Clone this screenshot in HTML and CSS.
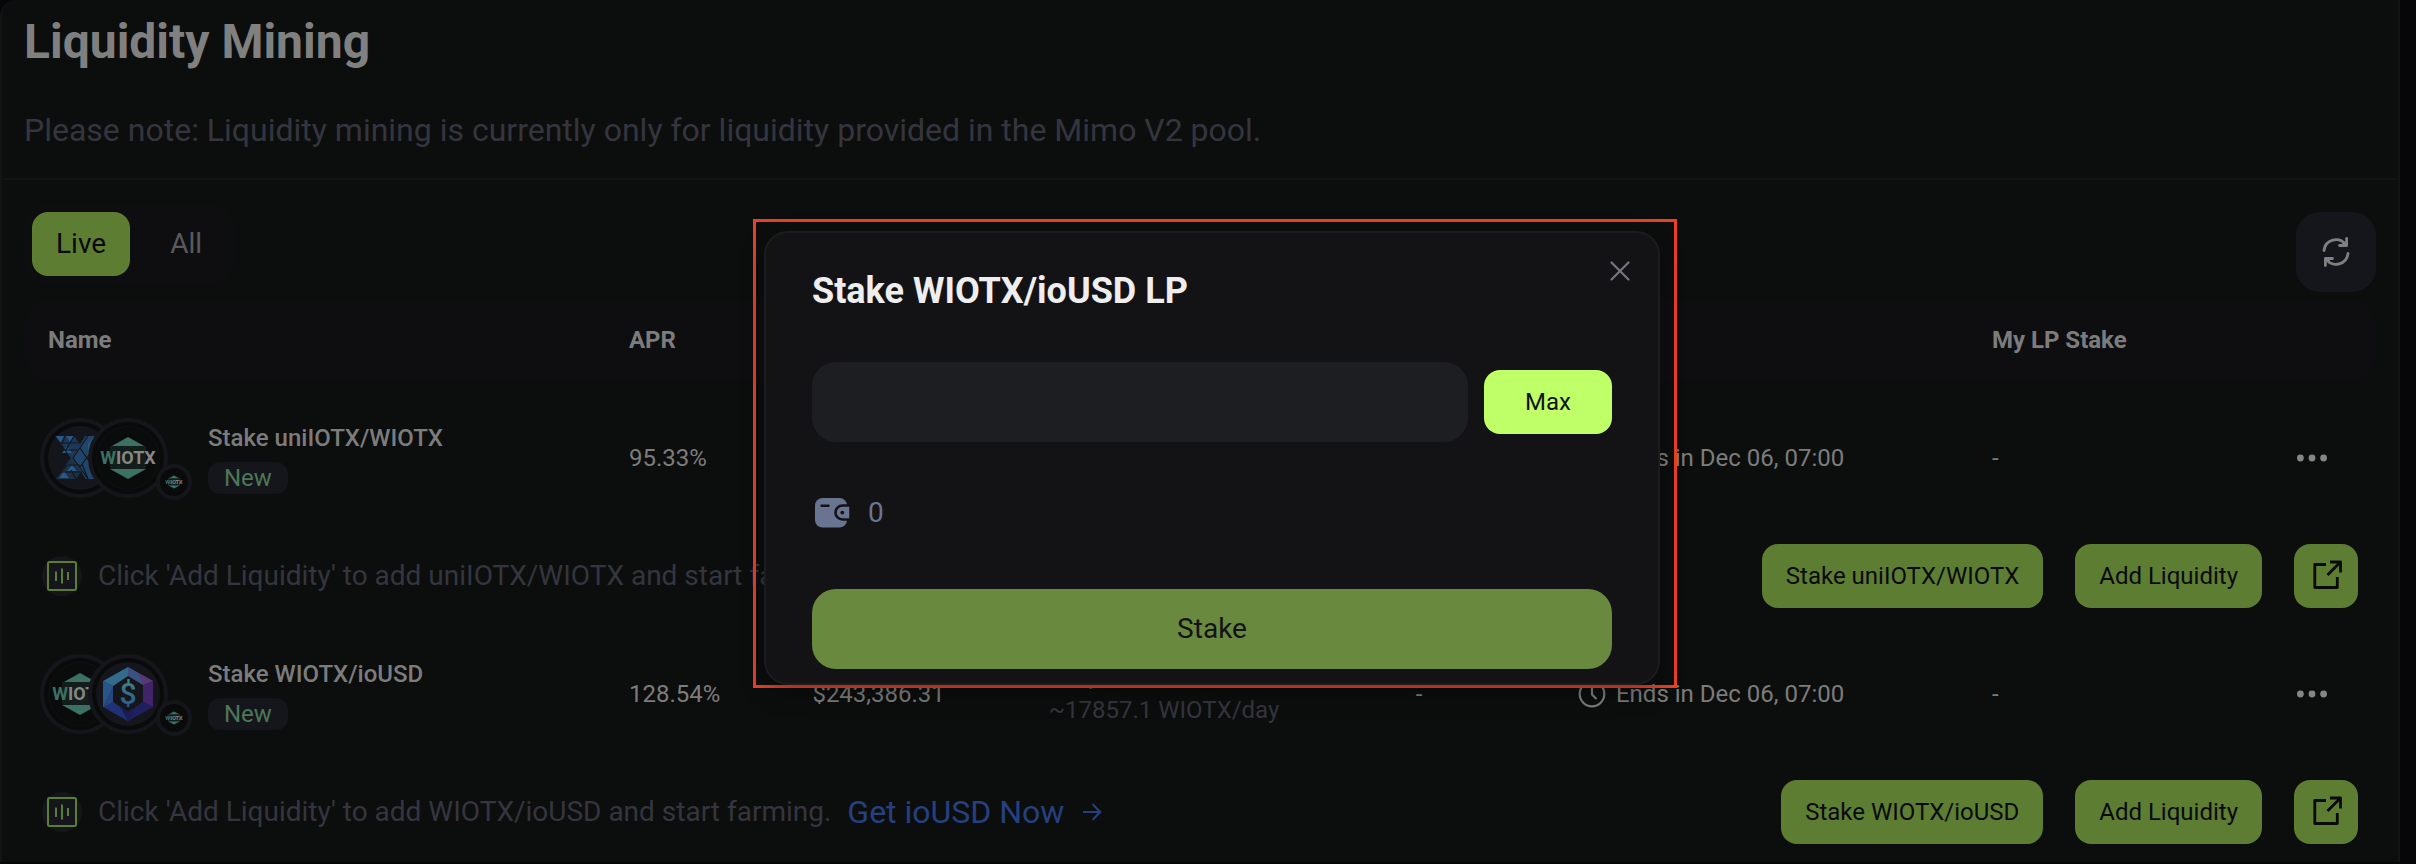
FILE: index.html
```html
<!DOCTYPE html>
<html lang="en">
<head>
<meta charset="utf-8">
<title>Liquidity Mining</title>
<link rel="stylesheet" href="styles.css">
</head>
<body>
<svg class="defs" aria-hidden="true">
  <defs>
    <linearGradient id="dollar" x1="0" y1="0" x2="0" y2="1">
      <stop offset="0" stop-color="#3f8c86"/>
      <stop offset="1" stop-color="#2a5190"/>
    </linearGradient>
    <symbol id="wiotx" viewBox="-32 -32 64 64">
      <circle r="32" fill="#0a0b0b"/>
      <circle r="31.5" fill="none" stroke="#101112"/>
      <path d="M0-21 18-11V11L0 21-18 11V-11Z" fill="#3c7163"/>
      <rect x="-18" y="-12" width="36" height="23" fill="#131d1b"/>
      <text x="0" y="6" text-anchor="middle" class="coin-text"><tspan fill="#3c7163">W</tspan><tspan fill="#868686">IOTX</tspan></text>
    </symbol>
    <symbol id="uniiotx" viewBox="-32 -32 64 64">
      <circle r="32" fill="#15161b"/>
      <path d="M5-22H26L-4 21H-25L-7-3Z" fill="#1c3046"/>
      <path d="M-25-22H-6L26 21H6Z" fill="#1d3857"/>
      <path d="M6-22H14V21H6L-3 7-7 0Z" fill="#214469"/>
      <path d="M8-14 14-22V10L8 2Z" fill="#27567f"/>
      <path d="M-13-12-8-5H-18ZM-16 13-11 20H-21ZM-25-22H-16L-20-15ZM-14-22H-6L-10-16ZM-8 7-3 13H-13Z" fill="#28598a"/>
      <path d="M-25-22-13-5M-15-22-18-14M-6-22-14-8M-20-15H-1M-18-8H-3M-23 14H4M-12 7H0M-4 21-9 12M-25 21-13 7M8 21 2 6M-7 0 8-22M-7 0 8 21M0-10 14 10M0 9 14-10" fill="none" stroke="#15161b" stroke-width="1.2"/>
    </symbol>
    <symbol id="iousd" viewBox="-32 -32 64 64">
      <circle r="32" fill="#15161b"/>
      <path d="M0-27-25-13-15-8 0-18Z" fill="#326b8c"/>
      <path d="M0-27 25-13 15-9 0-18Z" fill="#3c5183"/>
      <path d="M10-21 25-13 15-9Z" fill="#573875"/>
      <path d="M25-13V13L15 8V-9Z" fill="#412368"/>
      <path d="M25 13 0 27V18L15 8Z" fill="#21205e"/>
      <path d="M0 27-25 13-15 8 0 18Z" fill="#1f3277"/>
      <path d="M-25 13V-13L-15-8V8Z" fill="#2a5587"/>
      <path d="M-25 13-15-8V8Z" fill="#264680"/>
      <path d="M0 27-8 13 0 18 8 13Z" fill="#191d58"/>
      <text x="0" y="10" text-anchor="middle" class="dollar-text" fill="url(#dollar)">$</text>
    </symbol>
    <symbol id="bars" viewBox="0 0 40 40">
      <circle cx="20" cy="20" r="20" fill="#15161b"/>
      <rect x="6" y="6" width="28" height="28" rx="1.5" fill="none" stroke="#5d7d33" stroke-width="2"/>
      <path d="M14 15.500V25M20 12.500V27.500M26 16V24" stroke="#5d7d33" stroke-width="2"/>
    </symbol>
    <symbol id="clock" viewBox="0 0 28 28">
      <g fill="none" stroke="currentColor" stroke-width="2.200"><circle cx="14" cy="14" r="12.300"/><path d="M14 6.500V14.500L18.500 19"/></g>
    </symbol>
    <symbol id="dots" viewBox="0 0 48 48">
      <g fill="currentColor"><circle cx="12.400" cy="24" r="3.400"/><circle cx="24" cy="24" r="3.400"/><circle cx="35.600" cy="24" r="3.400"/></g>
    </symbol>
    <symbol id="open" viewBox="0 0 32 32">
      <path d="M16 4.500H4.800V27.500H27.300V17M20 2H30.500V12.500M30 2.500 17.500 15" fill="none" stroke="currentColor" stroke-width="2.800" stroke-linejoin="round"/>
    </symbol>
  </defs>
</svg>

<main class="panel">
  <header class="intro">
    <h1>Liquidity Mining</h1>
    <p>Please note: Liquidity mining is currently only for liquidity provided in the Mimo V2 pool.</p>
  </header>

  <div class="toolbar">
    <div class="tabs">
      <button type="button" class="tab tab-active">Live</button>
      <button type="button" class="tab">All</button>
    </div>
    <button type="button" class="refresh" aria-label="Refresh">
      <svg width="32" height="32" viewBox="0 0 32 32" fill="none" stroke="currentColor" stroke-width="2.800" stroke-linecap="round" stroke-linejoin="round">
        <path d="M4 14.500A12 12 0 0 1 25.500 8.500M26.600 2.500V9.500H19.500M23.500 6.800V9M28 17.500A12 12 0 0 1 6.500 23.500M5.400 29.500V22.500H12.500M8.500 25.200V23"/>
      </svg>
    </button>
  </div>

  <table class="pools">
    <colgroup>
      <col class="c-name"><col class="c-apr"><col class="c-tvl"><col class="c-reward"><col class="c-earned"><col class="c-time"><col class="c-stake">
    </colgroup>
    <thead>
      <tr><th>Name</th><th>APR</th><td></td><td></td><td></td><td></td><th>My LP Stake</th></tr>
    </thead>
    <tbody>
      <tr class="pool">
        <td class="name-cell">
          <div class="name">
            <div class="coins">
              <span class="coin"><svg><use href="#uniiotx"/></svg></span>
              <span class="coin coin-second"><svg><use href="#wiotx"/></svg></span>
              <span class="coin coin-small"><svg><use href="#wiotx"/></svg></span>
            </div>
            <div class="label"><strong>Stake uniIOTX/WIOTX</strong><span class="badge">New</span></div>
          </div>
        </td>
        <td>95.33%</td>
        <td></td>
        <td></td>
        <td></td>
        <td><div class="time"><svg width="28" height="28"><use href="#clock"/></svg>Ends in Dec 06, 07:00</div></td>
        <td><div class="stake">-<button type="button" class="more" aria-label="More"><svg width="48" height="48"><use href="#dots"/></svg></button></div></td>
      </tr>
      <tr class="guide">
        <td colspan="7">
          <div class="guide-line">
            <svg width="40" height="40"><use href="#bars"/></svg>
            <span>Click 'Add Liquidity' to add uniIOTX/WIOTX and start farming.</span>
            <div class="actions">
              <button type="button" class="btn">Stake uniIOTX/WIOTX</button>
              <button type="button" class="btn">Add Liquidity</button>
              <button type="button" class="btn btn-icon" aria-label="Open pool"><svg width="32" height="32"><use href="#open"/></svg></button>
            </div>
          </div>
        </td>
      </tr>
      <tr class="pool">
        <td class="name-cell">
          <div class="name">
            <div class="coins">
              <span class="coin"><svg><use href="#wiotx"/></svg></span>
              <span class="coin coin-second"><svg><use href="#iousd"/></svg></span>
              <span class="coin coin-small"><svg><use href="#wiotx"/></svg></span>
            </div>
            <div class="label"><strong>Stake WIOTX/ioUSD</strong><span class="badge">New</span></div>
          </div>
        </td>
        <td>128.54%</td>
        <td>$243,386.31</td>
        <td>$17,857<br><span class="muted">~17857.1 WIOTX/day</span></td>
        <td>-</td>
        <td><div class="time"><svg width="28" height="28"><use href="#clock"/></svg>Ends in Dec 06, 07:00</div></td>
        <td><div class="stake">-<button type="button" class="more" aria-label="More"><svg width="48" height="48"><use href="#dots"/></svg></button></div></td>
      </tr>
      <tr class="guide">
        <td colspan="7">
          <div class="guide-line">
            <svg width="40" height="40"><use href="#bars"/></svg>
            <span>Click 'Add Liquidity' to add WIOTX/ioUSD and start farming.</span>
            <a class="get" href="#get-iousd">Get ioUSD Now
              <svg width="20" height="20" viewBox="0 0 20 20" fill="none" stroke="currentColor" stroke-width="2"><path d="M1 10H18M10.500 2 18.300 10 10.500 18"/></svg>
            </a>
            <div class="actions">
              <button type="button" class="btn">Stake WIOTX/ioUSD</button>
              <button type="button" class="btn">Add Liquidity</button>
              <button type="button" class="btn btn-icon" aria-label="Open pool"><svg width="32" height="32"><use href="#open"/></svg></button>
            </div>
          </div>
        </td>
      </tr>
    </tbody>
  </table>
</main>

<div class="dialog-frame">
  <section class="dialog" role="dialog" aria-labelledby="dialog-title">
    <button type="button" class="close" aria-label="Close">
      <svg width="24" height="24" viewBox="0 0 24 24" fill="none" stroke="currentColor" stroke-width="2.200" stroke-linecap="round"><path d="M3.500 3.500 20.500 20.500M20.500 3.500 3.500 20.500"/></svg>
    </button>
    <h2 id="dialog-title">Stake WIOTX/ioUSD LP</h2>
    <div class="amount">
      <input type="text" aria-label="Amount to stake">
      <button type="button" class="max">Max</button>
    </div>
    <div class="balance">
      <svg width="40" height="32" viewBox="0 0 40 32">
        <rect x="3" y="1" width="32" height="29.500" rx="7.500" fill="#697590"/>
        <path d="M38.500 8.500V22.500H30.500A7 7 0 0 1 30.500 8.500Z" fill="#697590" stroke="#131315" stroke-width="2.600"/>
        <path d="M38 8H42V24H38Z" fill="#131315"/>
        <circle cx="30.300" cy="15.600" r="1.900" fill="#131315"/>
        <path d="M9.500 8.800H16.500" stroke="#131315" stroke-width="2.400" stroke-linecap="round"/>
      </svg>
      <span>0</span>
    </div>
    <button type="button" class="submit">Stake</button>
  </section>
</div>
</body>
</html>
```
FILE: styles.css
```css
* {
  box-sizing: border-box;
}

body {
  margin: 0;
  background: #060608;
  color: #7c7c7c;
  font-family: Roboto, "Liberation Sans", sans-serif;
  font-size: 24px;
  line-height: 32px;
}

button {
  border: 0;
  padding: 0;
  background: none;
  color: inherit;
  font: inherit;
}

svg {
  display: block;
  flex: none;
}

.defs {
  position: absolute;
  width: 0;
  height: 0;
}

.coin-text {
  font-size: 18px;
  font-weight: 700;
}

.dollar-text {
  font-size: 30px;
  font-weight: 500;
}

.panel {
  margin-right: 16px;
  border: solid #131316;
  border-width: 0 2px;
  border-top-left-radius: 16px;
  background: #0c0e0d;
  padding-bottom: 10px;
}

.intro {
  padding: 14px 22px 29px;
  border-bottom: 2px solid #131316;
}

h1 {
  margin: 0 0 41px;
  color: #808080;
  font-size: 48px;
  line-height: 56px;
}

.intro p {
  margin: 0;
  color: #35353f;
  font-size: 32px;
  line-height: 38px;
}

.toolbar {
  display: flex;
  justify-content: space-between;
  align-items: center;
  min-height: 120px;
  padding: 24px 22px 0;
}

.tabs {
  display: flex;
  align-self: flex-start;
  gap: 16px;
  padding: 8px;
  border-radius: 24px;
  background: #0e0e10;
}

.tab {
  height: 64px;
  padding: 0 24px;
  border-radius: 16px;
  color: #5a5a5c;
  font-size: 28px;
}

.tab-active {
  background: #5d7d33;
  color: #0a0a0c;
}

.refresh {
  display: grid;
  place-items: center;
  width: 80px;
  height: 80px;
  border-radius: 24px;
  background: #15161b;
  color: #808080;
}

.pools {
  width: calc(100% - 44px);
  margin: 0 22px;
  table-layout: fixed;
  border-collapse: separate;
  border-spacing: 0;
}

.c-name { width: 24.7%; }
.c-apr { width: 7.8%; }
.c-tvl { width: 10.05%; }
.c-reward { width: 15.6%; }
.c-earned { width: 6.9%; }
.c-time { width: 17.6%; }

.pools th,
.pools td {
  padding: 0 0 0 24px;
  text-align: left;
  white-space: nowrap;
}

thead tr {
  height: 80px;
}

.pools thead th,
.pools thead td {
  background: #0e0e10;
}

thead tr > :first-child {
  border-radius: 24px 0 0 24px;
}

thead tr > :last-child {
  border-radius: 0 24px 24px 0;
}

.pool {
  height: 156px;
}

.guide {
  height: 80px;
}

.pools .name-cell {
  padding-left: 16px;
}

.name {
  display: flex;
  align-items: center;
  gap: 16px;
}

.coins {
  position: relative;
  display: flex;
  width: 152px;
}

.coin {
  width: 80px;
  height: 80px;
  flex: none;
  padding: 4px;
  border: 4px solid #15161b;
  border-radius: 50%;
  background: #0a0a0b;
}

.coin svg {
  width: 100%;
  height: 100%;
}

.coin-second {
  margin-left: -32px;
}

.coin-small {
  position: absolute;
  right: 0;
  bottom: -2px;
  width: 36px;
  height: 36px;
}

.label {
  display: flex;
  flex-direction: column;
  align-items: flex-start;
  gap: 8px;
}

.label strong {
  font-weight: 500;
}

.badge {
  padding: 0 16px;
  border-radius: 12px;
  background: #15161b;
  color: #4d7759;
}

.muted {
  color: #35353f;
}

.time {
  display: flex;
  align-items: center;
  gap: 10px;
}

.stake {
  display: flex;
  align-items: center;
  justify-content: space-between;
  padding-right: 40px;
}

.more {
  color: #868686;
}

.pools .guide td {
  padding: 0 18px;
}

.guide-line {
  display: flex;
  align-items: center;
  gap: 16px;
  color: #35353f;
  font-size: 28px;
}

.get {
  display: flex;
  align-items: center;
  gap: 18px;
  color: #26407f;
  font-size: 32px;
  text-decoration: none;
}

.actions {
  display: flex;
  gap: 32px;
  margin-left: auto;
}

.btn {
  height: 64px;
  padding: 0 24px;
  border-radius: 16px;
  background: #5d7d33;
  color: #0a0a0c;
  font-size: 24px;
}

.btn-icon {
  display: grid;
  place-items: center;
  width: 64px;
  padding: 0;
}

/* The dialog lies over the page, inside a highlight frame. */
.dialog-frame {
  position: absolute;
  top: 219px;
  left: calc(50% - 455px);
  width: 924px;
  padding: 9px 14px 0 8px;
  border: 3px solid #ec3f24;
}

.dialog {
  position: relative;
  padding: 37px 46px 14px;
  border: 2px solid #1c1c1f;
  border-radius: 24px;
  background: #131315;
  box-shadow: 0 8px 24px rgba(0, 0, 0, 0.3);
}

.close {
  position: absolute;
  top: 26px;
  right: 26px;
  color: #77757f;
}

h2 {
  margin: 0 0 50px;
  color: #eeeeef;
  font-size: 36px;
  line-height: 42px;
}

.amount {
  display: flex;
  align-items: center;
  gap: 16px;
}

.amount input {
  flex: 1;
  min-width: 0;
  height: 80px;
  padding: 0 24px;
  border: 0;
  border-radius: 24px;
  background: #1d1e22;
  color: #eeeeef;
  font: inherit;
}

.max {
  width: 128px;
  height: 64px;
  border-radius: 16px;
  background: #bfff67;
  color: #131315;
}

.balance {
  display: flex;
  align-items: center;
  gap: 16px;
  margin: 55px 0 60px;
  color: #697590;
  font-size: 28px;
}

.submit {
  width: 100%;
  height: 80px;
  border-radius: 24px;
  background: #69893f;
  color: #131315;
  font-size: 28px;
}
```
